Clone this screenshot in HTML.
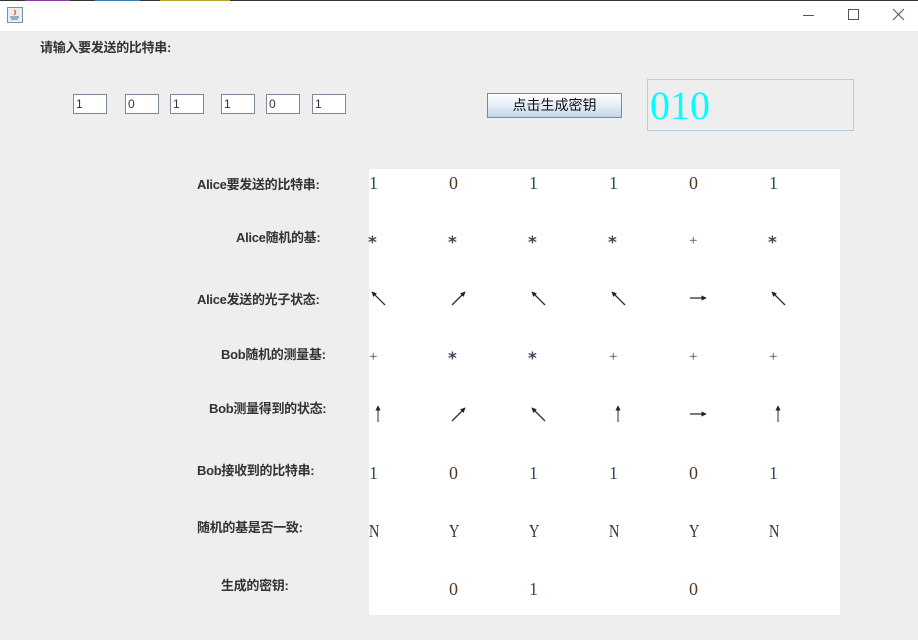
<!DOCTYPE html>
<html><head><meta charset="utf-8"><style>
body{margin:0;width:918px;height:640px;background:#eeeeee;position:relative;overflow:hidden;font-family:"Liberation Sans","Noto Sans CJK SC",sans-serif}
.tb{position:absolute;left:0;top:0;width:918px;height:31px;background:#fff}
.lbl{position:absolute;font-size:13px;font-weight:bold;color:#333;line-height:14px;white-space:nowrap;letter-spacing:-0.3px}
.in{position:absolute;top:94px;width:34px;height:20px;border:1px solid #7a8a99;background:#fff;font-size:12px;line-height:18px;padding-left:2px;box-sizing:border-box;color:#333}
.panel{position:absolute;left:369px;top:169px;width:471px;height:446px;background:#fff}
.c{position:absolute;font-family:"Liberation Serif",serif;font-size:18px;line-height:20px;color:#333}
.s{font-family:"DejaVu Sans",sans-serif;font-size:17px;color:#3a4a5a;font-weight:bold;margin-top:4px}
.p{font-size:15px;color:#444}
.one{color:#2b4c6e}.zero{color:#553a22}
.yn{transform:scaleX(0.8);transform-origin:left}
svg{position:absolute;overflow:visible}
</style></head><body>
<div class="tb"></div>
<div style="position:absolute;left:0;top:0;width:918px;height:1px;background:linear-gradient(90deg,#333 0 25px,#8a3ea0 25px 70px,#333 70px 95px,#3a80b0 95px 140px,#333 140px 160px,#b8a030 160px 230px,#333 230px 918px)"></div>
<svg style="left:7px;top:7px" width="16" height="16"><rect x="0.5" y="0.5" width="15" height="15" fill="#e8eef4" stroke="#7890a8"/><path d="M7 3 q3 2 0 5" stroke="#e07020" stroke-width="1.5" fill="none"/><path d="M3 10h9M4 12h7" stroke="#4a6a90"/></svg>
<svg style="left:803px;top:15px" width="12" height="2"><path d="M0 .5h11" stroke="#555"/></svg>
<svg style="left:848px;top:9px" width="12" height="12"><rect x=".5" y=".5" width="10" height="10" fill="none" stroke="#555"/></svg>
<svg style="left:893px;top:9px" width="12" height="12"><path d="M0 0l11 11M11 0L0 11" stroke="#555"/></svg>

<div class="lbl" style="left:40px;top:41px">请输入要发送的比特串:</div>
<div class="in" style="left:73px">1</div>
<div class="in" style="left:125px">0</div>
<div class="in" style="left:170px">1</div>
<div class="in" style="left:221px">1</div>
<div class="in" style="left:266px">0</div>
<div class="in" style="left:312px">1</div>

<div style="position:absolute;left:487px;top:93px;width:135px;height:25px;box-sizing:border-box;border:1px solid #7a8a9a;background:linear-gradient(#fdfeff,#e6eef7 50%,#c4d4e6);font-size:14px;line-height:22px;text-align:center;color:#111">点击生成密钥</div>
<div style="position:absolute;left:647px;top:79px;width:207px;height:52px;box-sizing:border-box;border:1px solid #b8cde0"></div>
<div style="position:absolute;left:650px;top:84px;font-family:'Liberation Serif',serif;font-size:40px;line-height:44px;color:#00ffff">010</div>

<div class="panel"></div>

<div class="lbl" style="left:197px;top:178px">Alice要发送的比特串:</div>
<div class="lbl" style="left:236px;top:231px">Alice随机的基:</div>
<div class="lbl" style="left:197px;top:293px">Alice发送的光子状态:</div>
<div class="lbl" style="left:221px;top:348px">Bob随机的测量基:</div>
<div class="lbl" style="left:209px;top:402px">Bob测量得到的状态:</div>
<div class="lbl" style="left:197px;top:464px">Bob接收到的比特串:</div>
<div class="lbl" style="left:197px;top:521px">随机的基是否一致:</div>
<div class="lbl" style="left:221px;top:579px">生成的密钥:</div>

<div class="c one" style="left:369px;top:173px">1</div>
<div class="c zero" style="left:449px;top:173px">0</div>
<div class="c one" style="left:529px;top:173px">1</div>
<div class="c one" style="left:609px;top:173px">1</div>
<div class="c zero" style="left:689px;top:173px">0</div>
<div class="c one" style="left:769px;top:173px">1</div>

<div class="c s" style="left:368px;top:229px">*</div>
<div class="c s" style="left:448px;top:229px">*</div>
<div class="c s" style="left:528px;top:229px">*</div>
<div class="c s" style="left:608px;top:229px">*</div>
<div class="c p" style="left:689px;top:231px">+</div>
<div class="c s" style="left:768px;top:229px">*</div>

<svg style="left:0;top:0" width="918" height="640">
<defs><marker id="a" markerWidth="4" markerHeight="4" refX="3.5" refY="2" orient="auto" markerUnits="strokeWidth"><path d="M0 0L4 2L0 4z" fill="#222"/></marker></defs>
<g stroke="#333" stroke-width="1.3" marker-end="url(#a)">
<line x1="385" y1="305" x2="372" y2="292"/>
<line x1="452" y1="305" x2="465" y2="292"/>
<line x1="545" y1="305" x2="532" y2="292"/>
<line x1="625" y1="305" x2="612" y2="292"/>
<line x1="690" y1="298" x2="706" y2="298"/>
<line x1="785" y1="305" x2="772" y2="292"/>
<line x1="452" y1="421" x2="465" y2="408"/>
<line x1="545" y1="421" x2="532" y2="408"/>
<line x1="690" y1="414" x2="706" y2="414"/>
</g>
<g stroke="#6a4a9a" stroke-width="1.3" marker-end="url(#a)">
<line x1="378" y1="422" x2="378" y2="406"/>
<line x1="618" y1="422" x2="618" y2="406"/>
<line x1="778" y1="422" x2="778" y2="406"/>
</g>
</svg>

<div class="c p" style="left:369px;top:347px">+</div>
<div class="c s" style="left:448px;top:345px">*</div>
<div class="c s" style="left:528px;top:345px">*</div>
<div class="c p" style="left:609px;top:347px">+</div>
<div class="c p" style="left:689px;top:347px">+</div>
<div class="c p" style="left:769px;top:347px">+</div>

<div class="c one" style="left:369px;top:463px">1</div>
<div class="c zero" style="left:449px;top:463px">0</div>
<div class="c one" style="left:529px;top:463px">1</div>
<div class="c one" style="left:609px;top:463px">1</div>
<div class="c zero" style="left:689px;top:463px">0</div>
<div class="c one" style="left:769px;top:463px">1</div>

<div class="c yn" style="left:369px;top:521px">N</div>
<div class="c yn" style="left:449px;top:521px">Y</div>
<div class="c yn" style="left:529px;top:521px">Y</div>
<div class="c yn" style="left:609px;top:521px">N</div>
<div class="c yn" style="left:689px;top:521px">Y</div>
<div class="c yn" style="left:769px;top:521px">N</div>

<div class="c zero" style="left:449px;top:579px">0</div>
<div class="c one" style="left:529px;top:579px">1</div>
<div class="c zero" style="left:689px;top:579px">0</div>
</body></html>
